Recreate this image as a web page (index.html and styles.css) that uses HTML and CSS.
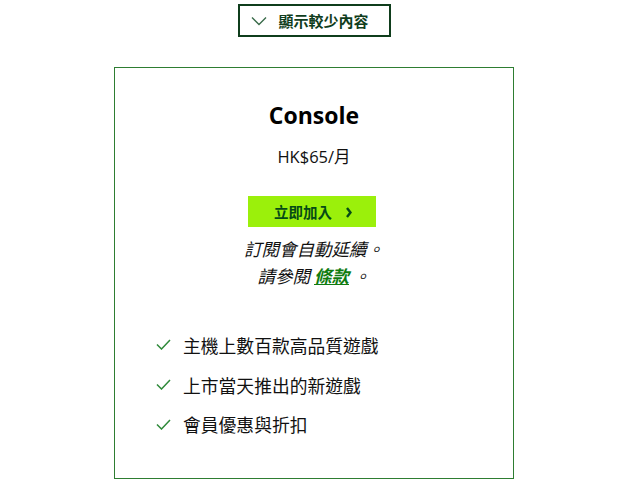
FILE: index.html
```html
<!DOCTYPE html>
<html lang="zh-Hant">
<head>
<meta charset="utf-8">
<link rel="stylesheet" href="styles.css">
</head>
<body>
<div class="page">
  <button class="toggle">
    <svg class="chev" width="16" height="10" viewBox="0 0 16 10"><path d="M1 1.5 L8 8.5 L15 1.5" fill="none" stroke="#3a6b4a" stroke-width="1.4"/></svg>
    <span>顯示較少內容</span>
  </button>
  <div class="card">
    <h2 class="title">Console</h2>
    <div class="price">HK$65/月</div>
    <a class="join">立即加入<svg class="arr" width="6" height="11" viewBox="0 0 6 11"><path d="M1 1 L4.5 5.5 L1 10" fill="none" stroke="#054b16" stroke-width="2.4"/></svg></a>
    <p class="note">訂閱會自動延續。<br>請參閱 <a class="terms">條款</a> 。</p>
    <ul class="features">
      <li><svg class="check" width="15" height="11" viewBox="0 0 15 11"><path d="M1 5.5 L5.5 10 L14 1" fill="none" stroke="#2f8a3a" stroke-width="1.5"/></svg>主機上數百款高品質遊戲</li>
      <li><svg class="check" width="15" height="11" viewBox="0 0 15 11"><path d="M1 5.5 L5.5 10 L14 1" fill="none" stroke="#2f8a3a" stroke-width="1.5"/></svg>上市當天推出的新遊戲</li>
      <li><svg class="check" width="15" height="11" viewBox="0 0 15 11"><path d="M1 5.5 L5.5 10 L14 1" fill="none" stroke="#2f8a3a" stroke-width="1.5"/></svg>會員優惠與折扣</li>
    </ul>
  </div>
</div>
</body>
</html>
```
FILE: styles.css
```css
html, body {
  margin: 0;
  padding: 0;
  background: #fff;
}
body {
  font-family: "Open Sans", "Noto Sans CJK TC", sans-serif;
  color: #111;
}
.page {
  display: flex;
  flex-direction: column;
  align-items: center;
  padding-top: 4px;
  padding-left: 3px;
}
.toggle {
  box-sizing: border-box;
  width: 153px;
  height: 33px;
  border: 2px solid #0f3d1c;
  background: #fff;
  display: flex;
  align-items: center;
  justify-content: flex-start;
  gap: 12px;
  padding: 0 0 0 11px;
  font-family: "Noto Sans CJK TC", sans-serif;
  font-weight: 700;
  font-size: 15px;
  color: #0f3d1c;
}
.chev { margin-top: 1px; }
.card {
  box-sizing: border-box;
  width: 400px;
  height: 412px;
  margin-top: 30px;
  border: 1px solid #2e7d32;
  display: flex;
  flex-direction: column;
  align-items: center;
}
.title {
  margin: 32px 0 0;
  font-size: 23px;
  font-weight: 700;
  line-height: 30px;
  color: #000;
}
.price {
  margin-top: 16px;
  font-size: 16.5px;
  line-height: 22px;
  color: #111;
}
.join {
  box-sizing: border-box;
  margin-top: 28px;
  margin-right: 5px;
  width: 128px;
  height: 31px;
  background: #9bf00b;
  display: flex;
  align-items: center;
  justify-content: center;
  font-family: "Noto Sans CJK TC", sans-serif;
  font-weight: 700;
  font-size: 14.5px;
  color: #054b16;
  padding-left: 3px;
}
.arr {
  margin-left: 14px;
  margin-top: 1px;
}
.note {
  margin: 8px 0 0;
  text-align: center;
  font-family: "Noto Sans CJK TC", sans-serif;
  font-style: italic;
  font-size: 17.5px;
  line-height: 27px;
  color: #111;
}
.terms {
  color: #107c10;
  font-weight: 700;
  text-decoration: underline;
}
.features {
  list-style: none;
  margin: 36px 0 0;
  padding: 0;
  align-self: flex-start;
  padding-left: 41px;
}
.features li {
  display: flex;
  align-items: center;
  height: 39.8px;
  font-family: "Noto Sans CJK TC", sans-serif;
  font-size: 17.8px;
  color: #111;
}
.check {
  margin-right: 12px;
}
```
